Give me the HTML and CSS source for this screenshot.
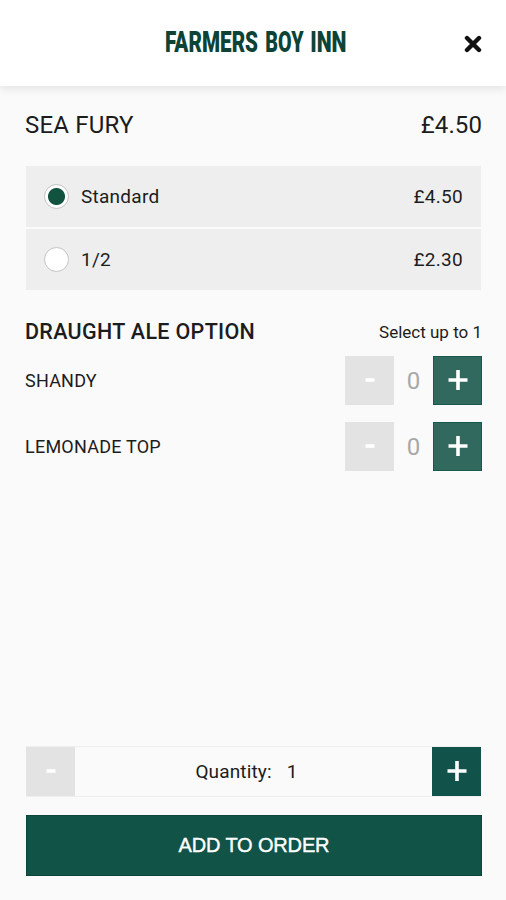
FILE: index.html
```html
<!DOCTYPE html>
<html lang="en">
<head>
    <meta charset="UTF-8">
    <meta name="viewport" content="width=device-width, initial-scale=1.0">
    <title>Farmers Boy Inn - Sea Fury</title>
    <link rel="stylesheet" href="styles.css">
</head>
<body>

<header class="header">
    <svg class="logo" width="200" height="40" viewBox="0 0 200 40">
        <!-- condensed lettering -->
        <g transform="scale(0.66 1)">
            <text x="0" y="30" textLength="141" lengthAdjust="spacingAndGlyphs">FARMERS</text>
            <text x="152" y="30" textLength="58" lengthAdjust="spacingAndGlyphs">BOY</text>
            <text x="220" y="30" textLength="55" lengthAdjust="spacingAndGlyphs">INN</text>
        </g>
    </svg>
    <button class="close" aria-label="Close">
        <svg width="18" height="18" viewBox="0 0 18 18">
            <path d="M3 3 L15 15 M15 3 L3 15"/>
        </svg>
    </button>
</header>

<main class="content">
    <div class="item-title">
        <span class="item-name">SEA FURY</span>
        <span class="item-price">£4.50</span>
    </div>

    <div class="sizes">
        <label class="size">
            <input type="radio" name="size" checked>
            <span class="size-name">Standard</span>
            <span class="size-price">£4.50</span>
        </label>
        <label class="size">
            <input type="radio" name="size">
            <span class="size-name">1/2</span>
            <span class="size-price">£2.30</span>
        </label>
    </div>

    <div class="option-header">
        <h2>DRAUGHT ALE OPTION</h2>
        <span class="hint">Select up to 1</span>
    </div>

    <div class="option">
        <span class="option-name">SHANDY</span>
        <button class="step minus" aria-label="Remove"><svg width="24" height="24" viewBox="0 0 24 24"><path d="M7.5 12 H16.5"/></svg></button>
        <span class="count">0</span>
        <button class="step plus" aria-label="Add"><svg width="24" height="24" viewBox="0 0 24 24"><path d="M2.5 12 H21.5 M12 2 V22"/></svg></button>
    </div>
    <div class="option">
        <span class="option-name">LEMONADE TOP</span>
        <button class="step minus" aria-label="Remove"><svg width="24" height="24" viewBox="0 0 24 24"><path d="M7.5 12 H16.5"/></svg></button>
        <span class="count">0</span>
        <button class="step plus" aria-label="Add"><svg width="24" height="24" viewBox="0 0 24 24"><path d="M2.5 12 H21.5 M12 2 V22"/></svg></button>
    </div>
</main>

<footer class="footer">
    <div class="quantity">
        <button class="step minus" aria-label="Less"><svg width="24" height="24" viewBox="0 0 24 24"><path d="M7.5 12 H16.5"/></svg></button>
        <div class="quantity-text"><span>Quantity:</span><span class="quantity-value">1</span></div>
        <button class="step plus" aria-label="More"><svg width="24" height="24" viewBox="0 0 24 24"><path d="M2.5 12 H21.5 M12 2 V22"/></svg></button>
    </div>
    <button class="add">ADD TO ORDER</button>
</footer>

</body>
</html>
```

FILE: styles.css
```css
* {
    box-sizing: border-box;
}
body {
    margin: 0;
    height: 900px;
    display: flex;
    flex-direction: column;
    background: #fafafa;
    color: #1c1c1c;
    font-family: Roboto, "Liberation Sans", sans-serif;
    overflow: hidden;
}
button {
    border: none;
    padding: 0;
    display: flex;
    align-items: center;
    justify-content: center;
}

/* Top bar */
.header {
    height: 86px;
    flex: none;
    display: flex;
    align-items: center;
    justify-content: space-between;
    padding: 0 24px 0 165px;
    background: #fff;
    box-shadow: 0 3px 8px rgba(0, 0, 0, 0.09);
}
.logo {
    margin-top: -2px;
}
.logo text {
    font-size: 30px;
    font-weight: 900;
    fill: #0d4337;
}
.close {
    background: none;
    margin-top: 1px;
}
.close path {
    stroke: #111;
    stroke-width: 4.4;
    stroke-linecap: round;
}

.content {
    flex: 1;
    padding: 0 24px 0 25px;
}
.item-title {
    display: flex;
    justify-content: space-between;
    height: 80px;
    line-height: 79px;
    font-size: 24px;
}
.item-name {
    letter-spacing: 0.2px;
}
.item-price {
    letter-spacing: 0.1px;
}

/* Size picker */
.sizes {
    display: flex;
    flex-direction: column;
    gap: 2px;
    margin: 0 1px;
}
.size {
    display: flex;
    align-items: center;
    height: 61px;
    padding: 0 18px;
    background: #eee;
    font-size: 19px;
}
.size input {
    appearance: none;
    width: 25px;
    height: 25px;
    margin: 0 12px 0 0;
    border: 1px solid #c4c4c4;
    border-radius: 50%;
    background: #fff;
}
.size input:checked {
    background: radial-gradient(circle, #11533f 8px, #fff 9px);
}
.size-name {
    flex: 1;
    letter-spacing: 0.25px;
}
.size-price {
    letter-spacing: 0.3px;
}

/* Options */
.option-header {
    display: flex;
    justify-content: space-between;
    align-items: center;
    height: 66px;
    padding-top: 17px;
}
.option-header h2 {
    margin: 0;
    font-size: 21.5px;
    font-weight: 500;
    letter-spacing: 0.32px;
}
.hint {
    font-size: 17px;
}
.option {
    display: flex;
    align-items: center;
    height: 49px;
    margin-bottom: 17px;
}
.option-name {
    flex: 1;
    font-size: 18px;
    letter-spacing: 0.23px;
}
.option .count {
    width: 39px;
    text-align: center;
    font-size: 24px;
    color: #a8a8a8;
}
.step {
    width: 49px;
    height: 49px;
    flex: none;
    padding-bottom: 2px;
}
.step path {
    stroke: #fff;
    stroke-width: 3.6;
}
.step.minus {
    background: #e3e3e3;
}
.step.plus {
    background: #11534a;
}
.option .plus {
    background: #31695f;
    border: 1px solid #17594b;
}

/* Bottom bar */
.footer {
    padding: 0 24px 24px 26px;
}
.quantity {
    display: flex;
    height: 51px;
    margin: 0 1px 18px 0;
    border: 1px solid #efefef;
    border-width: 1px 0;
}
.quantity-text {
    flex: 1;
    display: flex;
    align-items: center;
    justify-content: center;
    gap: 15px;
    padding-right: 14px;
    font-size: 19px;
    letter-spacing: 0.15px;
}
.add {
    width: 100%;
    height: 61px;
    background: #125348;
    border: 1px solid #0b4439;
    color: #fff;
    font-family: "Liberation Sans", Arial, sans-serif;
    font-size: 20px;
    letter-spacing: -0.15px;
    padding-bottom: 1px;
    -webkit-text-stroke: 0.4px #fff;
}
```
